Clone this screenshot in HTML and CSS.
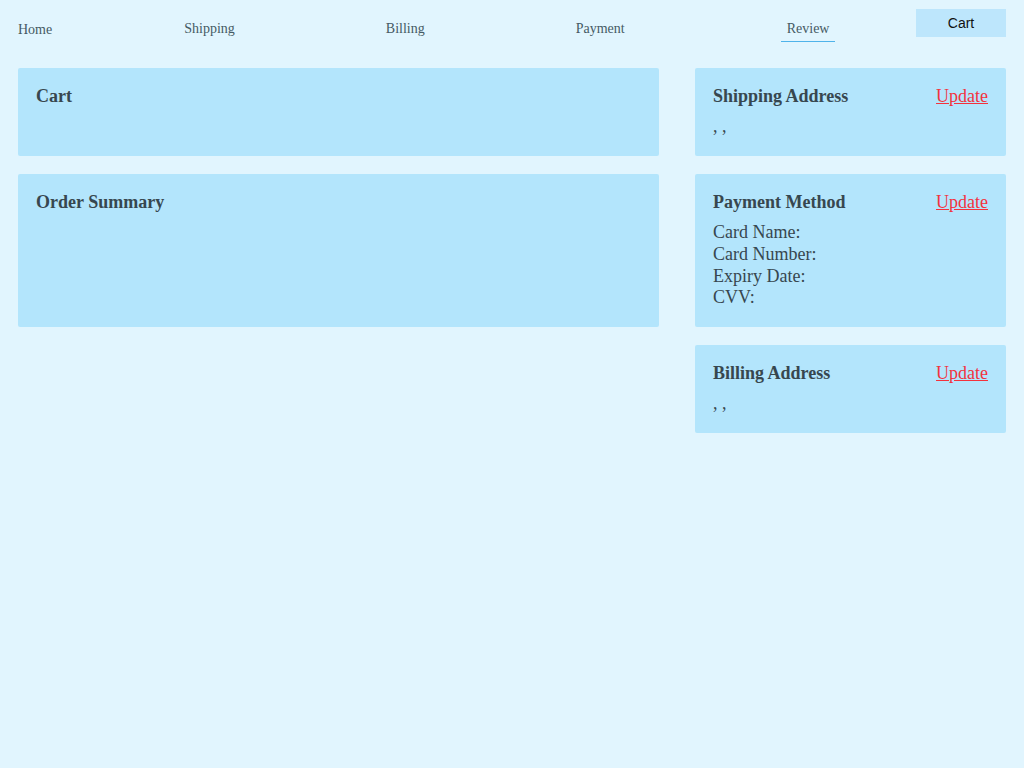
FILE: index.html
```html
<!DOCTYPE html>
<html>
<head>
<meta charset="utf-8">
<title>Review</title>
<link rel="stylesheet" href="styles.css">
</head>
<body>
<nav class="nav">
  <a class="nav-home">Home</a>
  <a class="step step-shipping">Shipping</a>
  <a class="step step-billing">Billing</a>
  <a class="step step-payment">Payment</a>
  <a class="step step-review active">Review</a>
  <button class="cart-btn">Cart</button>
</nav>
<main class="grid">
  <section class="card">
    <div class="card-head"><h2>Cart</h2></div>
    <div class="card-body empty"></div>
  </section>
  <section class="card">
    <div class="card-head"><h2>Shipping Address</h2><a class="update">Update</a></div>
    <div class="card-body">, ,</div>
  </section>
  <section class="card">
    <div class="card-head"><h2>Order Summary</h2></div>
    <div class="card-body"></div>
  </section>
  <section class="card">
    <div class="card-head"><h2>Payment Method</h2><a class="update">Update</a></div>
    <div class="card-body">
      <div>Card Name:</div>
      <div>Card Number:</div>
      <div>Expiry Date:</div>
      <div>CVV:</div>
    </div>
  </section>
  <div class="spacer"></div>
  <section class="card">
    <div class="card-head"><h2>Billing Address</h2><a class="update">Update</a></div>
    <div class="card-body">, ,</div>
  </section>
</main>
</body>
</html>
```
FILE: styles.css
```css
html, body {
  margin: 0;
  padding: 0;
  background: #e1f5fe;
  font-family: "Liberation Serif", "Times New Roman", serif;
  color: #37474f;
}
body { min-height: 768px; }

.nav {
  display: flex;
  align-items: flex-start;
  padding: 9px 18px 0 18px;
  height: 68px;
  box-sizing: border-box;
}
.nav a {
  font-size: 14px;
  line-height: 16px;
  color: #455a64;
  text-decoration: none;
}
.nav-home { margin-top: 13px; }
.step { margin-top: 12px; }
.step-shipping { margin-left: 132px; }
.step-billing { margin-left: 151px; }
.step-payment { margin-left: 151px; }
.step-review {
  margin-left: 156px;
  padding: 0 6px 4px 6px;
  border-bottom: 1px solid #4fb3ea;
}
.cart-btn {
  margin-left: auto;
  width: 90px;
  height: 28px;
  border: none;
  background: #bde6fc;
  font-family: "Liberation Sans", Arial, sans-serif;
  font-size: 14px;
  color: #111;
  padding: 0;
}

.grid {
  display: grid;
  grid-template-columns: 641px 311px;
  column-gap: 36px;
  row-gap: 18px;
  padding: 0 18px;
}
.card {
  background: #b3e5fc;
  border-radius: 2px;
  padding: 18px;
}
.card-head {
  display: flex;
  justify-content: space-between;
  align-items: center;
  height: 21px;
}
.card-head h2 {
  margin: 0;
  font-size: 18px;
  line-height: 21px;
  font-weight: bold;
  color: #37474f;
}
.update {
  font-size: 18px;
  line-height: 21px;
  color: #f4323c;
  text-decoration: underline;
}
.card-body {
  margin-top: 9px;
  font-size: 18px;
  line-height: 21.75px;
  color: #37474f;
}
.card-body.empty { min-height: 22px; }
```
